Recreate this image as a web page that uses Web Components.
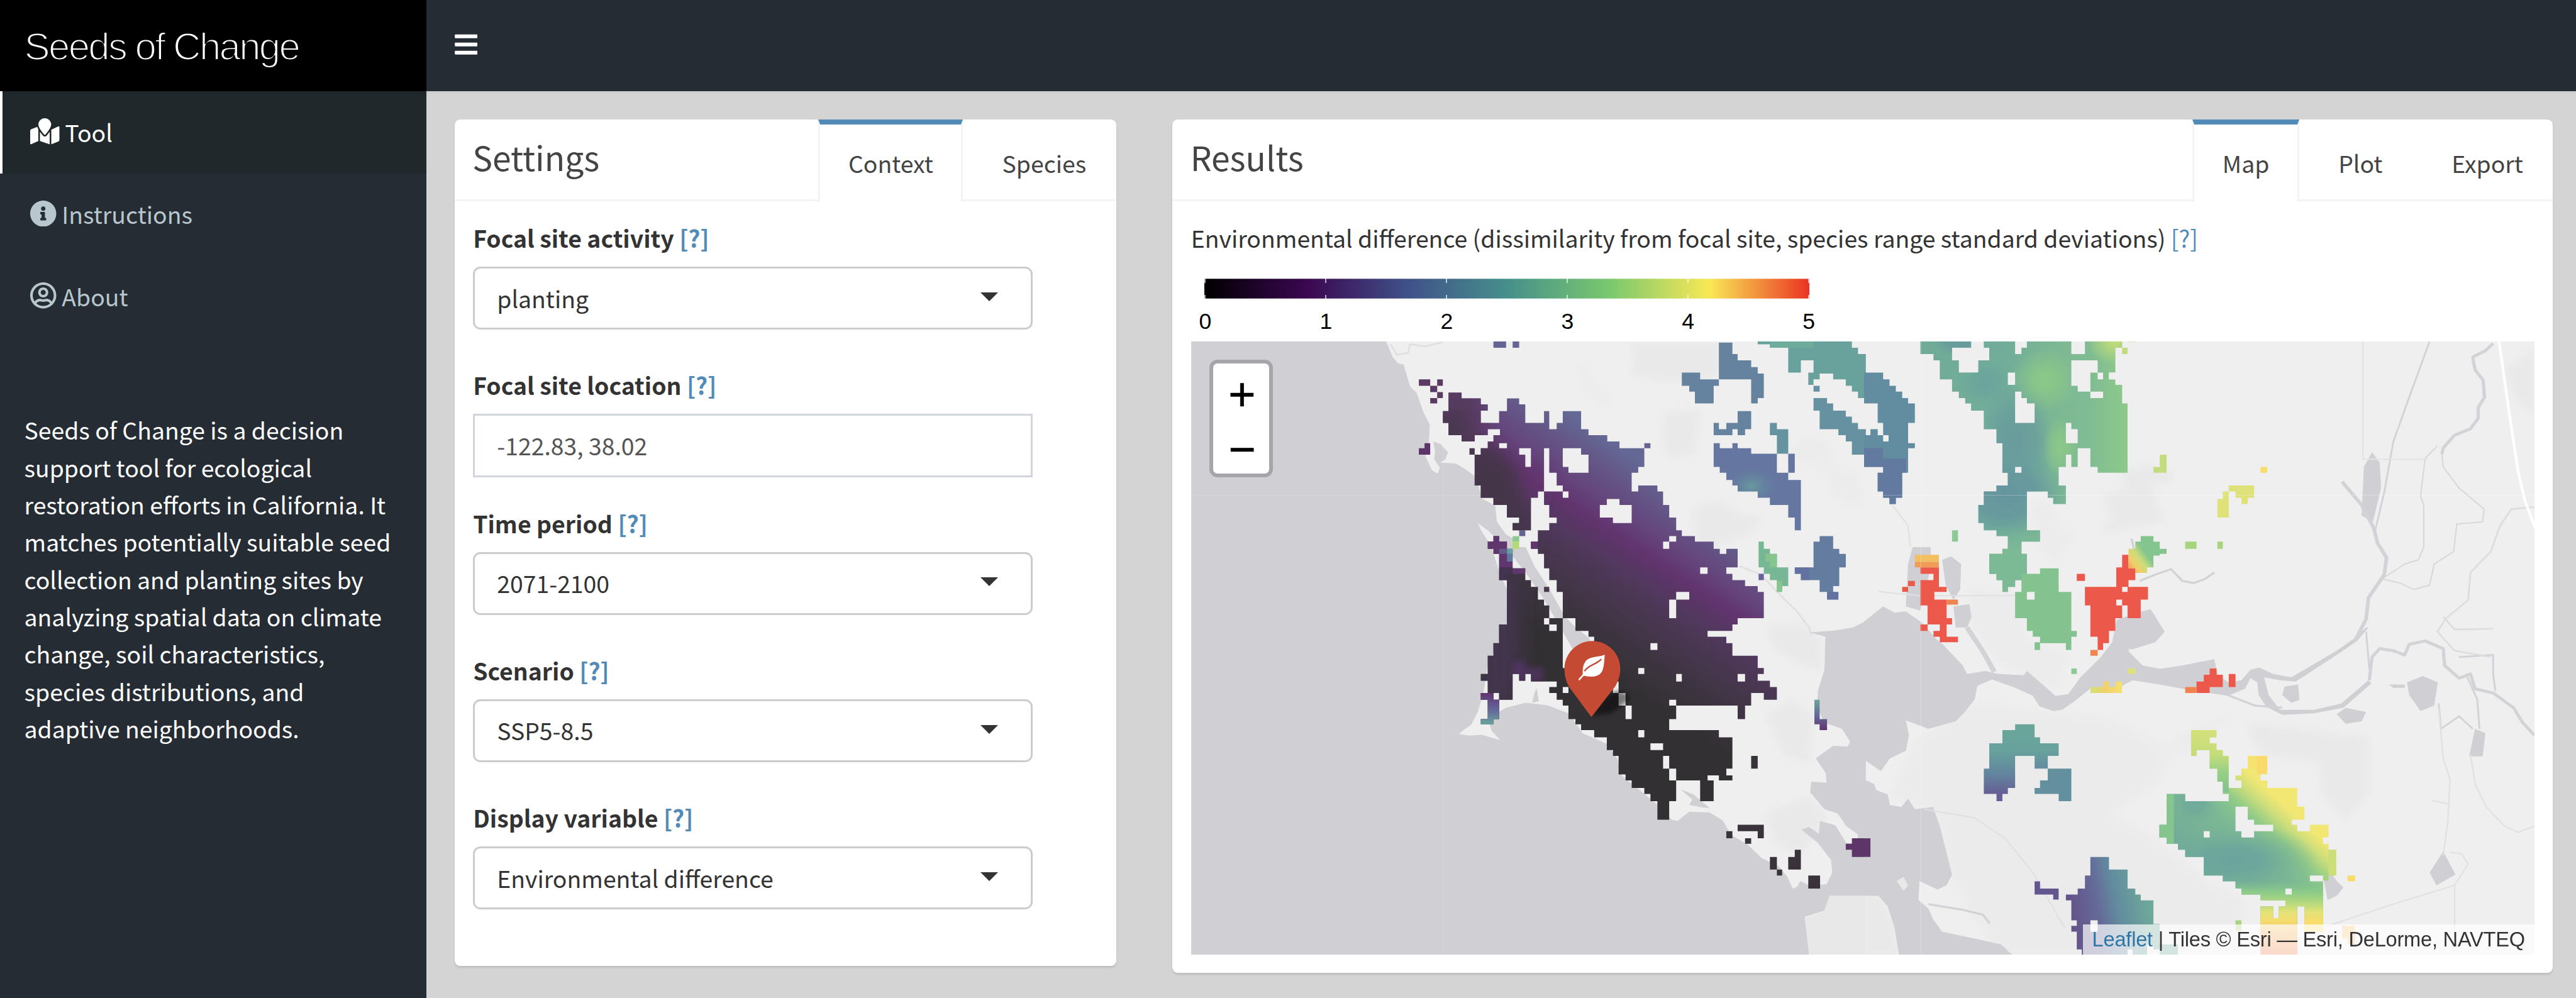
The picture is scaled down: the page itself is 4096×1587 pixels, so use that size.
<!DOCTYPE html>
<html lang="en">
<head>
<meta charset="utf-8">
<title>Seeds of Change</title>
<style>
html,body{margin:0;padding:0;background:#d4d4d4;overflow:hidden}
body{font-family:"Noto Sans CJK JP","Noto Sans",sans-serif;font-size:37.8px;line-height:60px;color:#333}
seeds-app{zoom:.988417}
</style>
</head>
<body>
<seeds-app></seeds-app>
<script>
const define = (name, html, setup) => {
  const t = document.createElement('template');
  t.innerHTML = html;
  customElements.define(name, class extends HTMLElement {
    constructor() {
      super();
      this.attachShadow({mode: 'open'}).appendChild(t.content.cloneNode(true));
    }
    connectedCallback() { if (setup) setup(this, this.shadowRoot); }
  });
};

define('app-header', `
<style>
:host{display:flex;height:147px;background:#252c33;flex:none;box-shadow:0 2px 5px rgba(0,0,0,.06);z-index:1}
.brand{width:686px;background:#000;color:#fff;display:flex;align-items:center;box-sizing:border-box;padding:2px 0 0 39px;
 font:62.5px/147px "Liberation Sans",Arial,sans-serif;letter-spacing:-2.75px;-webkit-text-stroke:2.2px #000;white-space:nowrap}
button{all:unset;display:flex;align-items:center;padding:0 0 3px 45px}
svg{width:37px;height:42px;fill:#fff}
</style>
<div class="brand"><slot></slot></div>
<button aria-label="Toggle navigation"><svg viewBox="0 0 448 512"><path d="M16 132h416c8.800 0 16-7.200 16-16V76c0-8.800-7.200-16-16-16H16C7.200 60 0 67.200 0 76v40c0 8.800 7.200 16 16 16zm0 160h416c8.800 0 16-7.200 16-16v-40c0-8.800-7.200-16-16-16H16c-8.800 0-16 7.200-16 16v40c0 8.800 7.200 16 16 16zm0 160h416c8.800 0 16-7.200 16-16v-40c0-8.800-7.200-16-16-16H16c-8.800 0-16 7.200-16 16v40c0 8.800 7.200 16 16 16z"/></svg></button>`);

define('menu-item', `
<style>
:host{display:flex;align-items:center;height:132px;box-sizing:border-box;border-left:5px solid transparent;padding-left:45px;color:#b8c7ce;fill:#b8c7ce}
:host([active]){background:#20282b;border-color:#fff;color:#fff;fill:#fff}
::slotted(svg){height:42px;flex:none;margin-right:8.500px;margin-bottom:3px}
</style><slot name="icon"></slot><span><slot></slot></span>`);

define('side-bar', `
<style>
:host{display:flex;flex-direction:column;width:686px;background:#252c33;flex:none}
p{margin:119px 0 0 39px;color:#fff;white-space:nowrap}
</style>
<slot></slot><p><slot name="about"></slot></p>`);

define('tab-link', `
<style>
:host{display:block;box-sizing:border-box;padding:0 45px;border:solid transparent;border-width:9px 3.100px 0;line-height:125px;color:#444;height:129px;white-space:nowrap}
:host([active]){border-top-color:#528bb8;border-left-color:#f4f4f4;border-right-color:#f4f4f4;background:#fff;height:133px}
</style><slot></slot>`);

define('tab-box', `
<style>
:host{display:flex;flex-direction:column;background:#fff;border-radius:9px;box-shadow:0 3px 3px rgba(0,0,0,.1);box-sizing:border-box}
header{display:flex;justify-content:space-between;height:132px;box-sizing:border-box;border-bottom:3.100px solid #f4f4f4;padding-left:29px}
h3{margin:0;font-weight:400;font-size:54px;line-height:119px;color:#444}
nav{display:flex;gap:15px}
section{display:flex;flex-direction:column;padding:0 30px}
</style>
<header><h3></h3><nav><slot name="tab"></slot></nav></header><section><slot></slot></section>`,
(el, r) => { r.querySelector('h3').textContent = el.getAttribute('heading'); });

define('form-field', `
<style>
:host{display:flex;flex-direction:column;width:900px;margin-bottom:30px}
label{font-weight:700;height:60px;white-space:nowrap}
a{color:#528bb8}
.box{display:flex;align-items:center;justify-content:space-between;height:101.500px;margin-top:16px;box-sizing:border-box;border:3.100px solid #ccc;border-radius:12px;padding:0 52px 0 35.500px}
.box i{width:0;height:0;border:15px solid transparent;border-top-color:#333;border-bottom:0;margin-bottom:5px}
:host([plain]) .box{border-color:#d3d5de;border-radius:0;color:#555}
:host([plain]) i{display:none}
</style>
<label></label><div class="box"><slot></slot><i></i></div>`,
(el, r) => { r.querySelector('label').innerHTML = el.getAttribute('label') + ' <a>[?]</a>'; });

define('color-legend', `
<style>
:host{display:flex;flex-direction:column;width:973px;margin-left:22px}
.bar{height:33px;display:flex;justify-content:space-between;
 background:linear-gradient(90deg,#000,#3b0751 17%,#3f5189 33.500%,#468f8b 50%,#7ac86f 67%,#f9e855 83.500%,#ea3323);box-shadow:inset 0 1px rgba(255,255,255,.3),inset 0 -1px rgba(255,255,255,.3)}
.bar i{width:2px;background:linear-gradient(rgba(255,255,255,.65) 7px,transparent 7px 26px,rgba(255,255,255,.65) 26px)}
.nums{display:flex;justify-content:space-between;margin:0 -19px;font:36px/42px "Liberation Sans",Arial,sans-serif;color:#000;padding-top:15.500px}
.nums span{width:40px;text-align:center}
</style>
<div class="bar"><i></i><i></i><i></i><i></i><i></i><i></i></div>
<div class="nums"><span>0</span><span>1</span><span>2</span><span>3</span><span>4</span><span>5</span></div>`);

define('zoom-control', `
<style>
:host{display:flex;flex-direction:column;width:90px;border:6.100px solid #a6a5aa;border-radius:13px;overflow:hidden;background:#fff}
a{height:88.500px;display:flex;align-items:center;justify-content:center;color:#000;font:75px/88px "Liberation Sans",Arial,sans-serif;-webkit-text-stroke:.7px #000}
a:first-child{border-bottom:3.100px solid #ccc}
a span{display:block;margin:13px 0 0 2px}
</style><a><span>+</span></a><a><span>−</span></a>`);

define('site-map', `
<style>
:host{display:block;position:relative;width:2161px;height:987px;overflow:hidden;background:#efefef}
svg{display:block;width:2161px;height:987px}
zoom-control{position:absolute;left:30px;top:30px}
.credit{position:absolute;right:0;bottom:0;height:49px;padding:0 15px;background:rgba(255,255,255,.7);font:33px/49px "Liberation Sans",Arial,sans-serif;color:#333;white-space:nowrap;letter-spacing:-.23px}
.credit a{color:#3075a6}
</style>
<svg viewBox="1916 549 2161 987">
<defs>
<linearGradient id="m" gradientUnits="userSpaceOnUse" x1="600" y1="661" x2="942" y2="169">
<stop offset=".17" stop-color="#333034"/><stop offset=".3" stop-color="#3c343f"/><stop offset=".4" stop-color="#45364b"/><stop offset=".53" stop-color="#50385c"/><stop offset=".64" stop-color="#62346f"/><stop offset=".73" stop-color="#65467d"/><stop offset=".81" stop-color="#645384"/><stop offset=".93" stop-color="#646895"/></linearGradient>
<linearGradient id="p1" gradientUnits="userSpaceOnUse" x1="122" y1="0" x2="580" y2="0">
<stop offset="0" stop-color="#70ab98"/><stop offset=".4" stop-color="#70ac99"/><stop offset=".62" stop-color="#7cb794"/><stop offset=".8" stop-color="#7fbb93"/><stop offset="1" stop-color="#8dca89"/></linearGradient>
<linearGradient id="p1b" gradientUnits="userSpaceOnUse" x1="0" y1="450" x2="0" y2="606"><stop offset="0" stop-color="#7cb995" stop-opacity="0"/><stop offset=".35" stop-color="#7cb995"/></linearGradient>
<radialGradient id="g1"><stop offset="0" stop-color="#8bc987"/><stop offset=".3" stop-color="#8bc888" stop-opacity=".85"/><stop offset="1" stop-color="#8bc987" stop-opacity="0"/></radialGradient>
<radialGradient id="g2"><stop offset="0" stop-color="#66949e"/><stop offset=".5" stop-color="#67999e" stop-opacity=".9"/><stop offset="1" stop-color="#6aa29e" stop-opacity="0"/></radialGradient>
<radialGradient id="gy"><stop offset="0" stop-color="#c4dd78"/><stop offset="1" stop-color="#c4dd78" stop-opacity="0"/></radialGradient>
<radialGradient id="gt"><stop offset="0" stop-color="#68a59c"/><stop offset="1" stop-color="#6388a0" stop-opacity="0"/></radialGradient>
<radialGradient id="gb"><stop offset="0" stop-color="#6ba49d"/><stop offset=".35" stop-color="#6ca69c" stop-opacity=".9"/><stop offset="1" stop-color="#78b397" stop-opacity="0"/></radialGradient>
<linearGradient id="up" gradientUnits="userSpaceOnUse" x1="0" y1="919" x2="0" y2="1101"><stop offset="0" stop-color="#6aa699"/><stop offset=".35" stop-color="#68a19d"/><stop offset=".65" stop-color="#63849f"/><stop offset=".9" stop-color="#655f93"/></linearGradient>
<linearGradient id="lo" gradientUnits="userSpaceOnUse" x1="460" y1="1400" x2="630" y2="1370"><stop offset="0" stop-color="#645489"/><stop offset=".35" stop-color="#646a98"/><stop offset=".6" stop-color="#628c9f"/><stop offset="1" stop-color="#6ea899"/></linearGradient>
<linearGradient id="dy" gradientUnits="userSpaceOnUse" x1="760" y1="1280" x2="925" y2="1110"><stop offset="0" stop-color="#70aa99"/><stop offset=".5" stop-color="#7db894"/><stop offset=".62" stop-color="#84c18f"/><stop offset=".72" stop-color="#93cc87"/><stop offset=".88" stop-color="#d0df7a"/><stop offset="1" stop-color="#f3e774"/></linearGradient>
<linearGradient id="dz" gradientUnits="userSpaceOnUse" x1="0" y1="1290" x2="0" y2="1465"><stop offset="0" stop-color="#84c58b" stop-opacity="0"/><stop offset=".15" stop-color="#8ccb89"/><stop offset=".3" stop-color="#b5d97e"/><stop offset=".42" stop-color="#e4e277"/><stop offset=".55" stop-color="#f4dc6e"/><stop offset=".68" stop-color="#f3b962"/><stop offset="1" stop-color="#ef7e50"/></linearGradient>
<linearGradient id="yl" gradientUnits="userSpaceOnUse" x1="0" y1="933" x2="0" y2="1080"><stop offset="0" stop-color="#d4e07a"/><stop offset=".4" stop-color="#c4dc7b"/><stop offset=".7" stop-color="#95cf87"/><stop offset="1" stop-color="#82c08f"/></linearGradient>
<linearGradient id="tp" x1="0" y1="0" x2="0" y2="1"><stop offset="0" stop-color="#6aa69b"/><stop offset=".5" stop-color="#656b99"/><stop offset="1" stop-color="#5f3470"/></linearGradient>
<linearGradient id="pt" x1="0" y1="0" x2="0" y2="1"><stop offset="0" stop-color="#61346f"/><stop offset=".5" stop-color="#65629a"/><stop offset="1" stop-color="#68a49e"/></linearGradient>
<linearGradient id="rg" x1="0" y1="1" x2=".7" y2=".5"><stop offset="0" stop-color="#ef8a50"/><stop offset=".3" stop-color="#f2cf68"/><stop offset=".55" stop-color="#c9dd7b"/><stop offset=".8" stop-color="#84c48e"/></linearGradient>
<linearGradient id="oy"><stop offset="0" stop-color="#d3df7b"/><stop offset=".5" stop-color="#f3d069"/><stop offset="1" stop-color="#f4e273"/></linearGradient>
<filter id="b6" x="-30%" y="-30%" width="160%" height="160%"><feGaussianBlur stdDeviation="7"/></filter>
<filter id="b20" x="-50%" y="-50%" width="200%" height="200%"><feGaussianBlur stdDeviation="20"/></filter>
<path id="M" clip-rule="evenodd" d="M613 134H643V148H687V162H703V177H687V206H729V178H747V148H775V162H789V206H832V178H844V221H861V206H875V178H917V221H934V235H977V250H1005V266H1062V310H1048V324H1033V368H1048V354H1092V368H1105V400H1119V430H1135V460H1148V474H1178V487H1221V504H1235V516H1250V504H1276V548H1250V563H1264V578H1293V592H1322V606H1336V668H1276V683H1264V698H1207V712H1250V727H1264V757H1322V786H1336V800H1322V816H1350V831H1366V861H1336V845H1307V875H1293V907H1276V875H1135V907H1119V933H1233V950H1264V1024H1250V1040H1264V1052H1233V1040H1207V1052H1221V1101H1190V1052H1135V1101H1119V1145H1092V1101H1076V1084H1062V1070H1033V1052H1019V1038H1003V994H990V980H976V950H947V933H917V919H904V907H888V875H875V861H861V845H844V831H861V818H802V800H789V816H775V800H760V861H729V907H716V919H687V907H703V861H687V845H703V816H687V800H703V757H716V727H729V683H747V578H729V516H716V504H703V487H716V474H729V487H747V504H760V550H789V578H802V594H818V624H832V638H844V668H875V757H900L947 722V712H934V698H904V668H875V606H861V578H844V550H832V516H818V504H802V487H818V460H844V443H861V430H844V400H832V368H875V354H861V324H844V266H832V368H818V383H802V460H760V443H775V430H747V400H716V383H687V354H673V281H687V266H703V250H716V235H731V221H703V235H673V250H643V235H613V206H600V178H613Z
M729 254V266H747V254ZM775 266V281H789V310H802V266ZM875 266V310H888V324H934V281H917V266ZM875 368V383H888V368ZM976 386V400H960V430H990V443H1033V400H1005V386ZM1119 474V487H1105V504H1119V487H1135V474ZM1190 548V563H1207V548ZM1135 606V624H1119V668H1135V624H1165V606ZM1076 727V743H1092V727ZM1048 786V800H1062V786ZM1135 800V818H1148V800ZM1276 800V818H1293V800ZM1119 861V875H1135V861ZM1019 875V907H1033V875ZM1048 933V950H1062V933ZM1076 964V980H1105V964ZM1105 994V1024H1119V1052H1135V1024H1119V994ZM832 668V683H844V698H861V683H844V668ZM875 757V786H888V757ZM875 831V845H888V831ZM990 818V845H1003V875H1019V845H1003V818ZM716 845V861H729V845Z"/>
<path id="P1" d="M122 13H234V28H192V58H207V87H250V58H274V28H262V13H331V43H345V28H357V13H455V43H485V13H567V28H552V87H538V103H552V116H567V160H579V324H513V310H497V266H469V310H455V281H443V310H427V354H443V398H415V383H403V368H357V460H386V487H345V516H357V578H331V594H315V606H303V578H290V563H274V516H303V504H315V474H290V460H262V443H250V400H262V368H290V354H315V324H303V254H290V221H262V177H234V160H221V147H207V132H192V103H165V58H151V43H122Z"/>
<path id="P5" d="M719 933H775V950H760V964H775V980H789V994H802V1070H830V1052H817V1040H830V1024H844V994H887V1038H872V1052H887V1070H953V1114H969V1145H941V1157H953V1172H981V1157H1022V1187H1010V1202H1022V1216H1039V1277H1010V1410H969V1350H953V1465H872V1350H900V1378H912V1350H927V1336H872V1322H830V1308H817V1291H789V1277H747V1233H706V1216H690V1202H665V1187H649V1157H665V1084H706V1101H802V1084H789V1055H777V1024H760V980H731V994H719Z"/>
<clipPath id="cm"><use href="#M" clip-rule="evenodd"/></clipPath><clipPath id="c1"><use href="#P1"/></clipPath><clipPath id="c5"><use href="#P5"/></clipPath>
</defs>
<rect x="1916" y="549" width="2161" height="987" fill="#efefef"/>

<g transform="translate(1900 540) scale(.70153 .67985)">
<g fill="#e9e9e9" filter="url(#b6)"><path d="M1030 13H1230L1240 70L1210 105L1110 108L1030 90L1040 50Z"/><path d="M1110 180L1190 175L1175 280L1120 290L1100 240Z"/><path d="M1170 410L1230 390L1290 425L1335 430L1300 470L1240 490L1220 520L1180 480Z"/><path d="M910 60L950 110L985 150L960 160L925 115Z" opacity=".5"/><path d="M1390 285L1430 240L1480 250L1500 320L1550 330L1560 400L1500 380L1480 310Z" opacity=".6"/><path d="M1340 690L1420 680L1470 720L1465 790L1430 780L1360 740Z"/><path d="M1340 900L1400 860L1450 900L1440 1010L1380 990Z"/><path d="M1340 1130L1440 1090L1480 1140L1420 1230L1360 1200Z"/></g>
<path fill="none" stroke="#e0e0e3" stroke-width="4" d="M480 20L495 45L520 40L525 20L560 25L600 15M1280 545L1330 565L1370 610L1410 650L1440 690L1445 710"/>
<path fill="#d0cfd4" d="M23 13H470L485 50L497 65L510 68L525 120L540 135L555 180L570 210L568 250L560 285L575 318L588 326L593 312L580 292L582 272L578 250L595 256L612 276L606 292L594 300L630 302L655 318L676 334L690 385L720 402L724 440L745 470L762 480L765 500L790 500L810 545L845 600L880 665L905 690L935 715L945 740L900 745L875 700L830 620L790 560L755 515L728 485L705 462L680 443L690 465L710 495L730 560L747 600V680L725 730L703 780L694 840L680 890L665 920L636 942L660 946L690 944L732 957L712 935L703 905L745 880L790 868L840 874L890 894L920 940L975 965L1000 1000L1010 1040L1060 1082L1098 1115L1125 1145L1138 1148L1165 1126L1212 1128L1242 1147L1260 1180L1300 1205L1330 1235L1370 1255L1390 1280L1402 1308L1412 1304L1420 1290L1440 1300L1480 1298L1493 1270L1490 1240L1460 1200L1422 1168L1440 1162L1462 1178L1465 1148L1500 1158L1525 1200L1550 1202L1552 1180L1525 1160L1505 1130L1475 1120L1442 1080L1445 1055L1480 1057L1478 1035L1455 1000L1495 970L1528 972L1534 960L1515 930L1475 915L1458 880L1460 840L1475 790L1477 712L1440 702L1500 697L1540 690L1570 675V1325L1487 1325L1475 1360L1430 1375L1440 1465H23Z"/>
<path fill="#e8e8e8" d="M1487 1325H1570V1466H1440L1430 1378L1475 1362Z"/>
<path fill="#d0cfd4" d="M1145 1073L1175 1085L1212 1118L1195 1116L1165 1110L1172 1097ZM815 833L820 865L805 868L810 845Z"/>
<path fill="none" stroke="#fff" stroke-opacity=".15" stroke-width="1.500" d="M601 13V1465M23 377H1568"/>

<path fill="#5b3a63" d="M545 103H571V118H587V103H600V118H587V133H600V147H587V160H571V147H587V133H571V118H545Z"/>
<path fill="#5d3469" d="M545 266H558V254H571V281H545Z"/><path fill="#4a384f" d="M661 266H673V281H661ZM832 594H844V606H832Z"/><path fill="#646593" d="M1062 254H1076V266H1062ZM716 13H745V28H716ZM760 13H775V28H760ZM775 460H789V474H775Z"/>
<use href="#M" fill="url(#m)" fill-rule="evenodd"/>
<g clip-path="url(#cm)">
<g filter="url(#b20)"><path fill="#583a62" d="M570 100H690L700 250H600L570 220Z"/><path fill="#4a3850" d="M560 190L650 170L670 260H560Z"/><path fill="#44364a" d="M640 260H720L770 320L790 400L810 500H640Z"/><path fill="#64346e" d="M790 300L830 310V370L800 390L790 350Z"/></g>
<path filter="url(#b20)" fill="#43344c" d="M690 560H775L780 800L750 900H680Z"/>
<path fill="#61366f" d="M703 487H716V474H729V487H747V534H760V548H729V516H716V504H703ZM760 548H789V563H760ZM802 487H818V504H802Z"/>
<path fill="#48345a" opacity=".6" d="M729 548H760V563H747V578H729Z"/>
<path fill="#57366a" filter="url(#b6)" opacity=".7" d="M760 770H790V785H830V818H760Z"/>
</g>
<path fill="#8cc98f" d="M760 474H775V487H760Z"/><path fill="#b4da77" d="M760 487H775V504H760Z"/><path fill="#67a09e" d="M747 504H760V516H747Z"/><path fill="#6278a0" d="M747 516H760V534H747Z"/><path fill="#655b8c" d="M729 504H747V516H729Z"/>
<path fill="url(#pt)" d="M687 845H716V861H729V907H716V919H687V907H703V861H687Z"/>
<path fill="#39323a" d="M1307 994H1322V1024H1307ZM1276 1157H1336V1189H1322V1172H1276ZM1250 1172H1264V1189H1250ZM1293 1189H1307V1202H1293ZM1350 1233H1366V1263H1350ZM1366 1263H1378V1277H1366ZM1407 1216H1421V1263H1392V1233H1407ZM1438 1277H1465V1308H1438Z"/>
<path fill="#5d3569" d="M1524 1202H1538V1189H1570V1233H1538V1216H1524Z"/>
<path fill="#65829f" d="M1233 16H1264V43H1276V58H1307V74H1322V89H1336V147H1322V160H1307V103H1233V118H1221V160H1178V132H1165V118H1148V87H1190V103H1233ZM1221 206H1233V221H1250V206H1276V178H1307V221H1293V235H1276V221H1264V235H1221Z"/>
<path fill="#65939f" d="M1350 206H1366V221H1392V279H1366V235H1350Z"/>
<path fill="#6576a1" d="M1392 279H1407V324H1392ZM1221 254H1235V266H1264V254H1276V266H1307V279H1366V324H1392V341H1421V460H1407V430H1392V400H1350V383H1322V368H1276V354H1264V341H1250V324H1235V310H1221Z"/>
<path fill="url(#gt)" opacity=".75" d="M1250 310H1366V400H1350V383H1322V368H1276V354H1264V341H1250Z"/>
<path fill="#78b795" d="M1324 487H1336V504H1350V516H1366V548H1392V592H1378V606H1366V578H1350V563H1336V548H1324Z"/><path fill="#88c48d" d="M1340 516H1366V548H1350V534H1340ZM1366 580H1378V606H1366Z"/>
<path fill="#67639a" d="M1324 563H1336V578H1324Z"/>
<path fill="#637ca0" d="M1464 474H1495V504H1509V516H1524V548H1509V592H1495V606H1507V624H1481V606H1464V578H1421V563H1407V548H1450V487H1464Z"/><path fill="#6465a0" opacity=".5" d="M1407 548H1440V578H1421V563H1407ZM1481 606H1507V624H1481Z"/>
<path fill="#69a29d" d="M1322 13H1538V28H1552V43H1570V147H1552V132H1538V118H1524V103H1495V89H1464V103H1450V116H1438V87H1450V58H1421V87H1392V28H1350V20H1322Z"/>
<path fill="#6fb09a" opacity=".6" d="M1350 13H1450V28H1350Z"/>
<path fill="#6591a0" d="M1450 118H1464V132H1450ZM1450 147H1481V160H1495V177H1524V191H1538V206H1552V221H1570V281H1538V250H1524V235H1507V221H1464V177H1450Z"/>
<path fill="url(#tp)" d="M1452 861H1464V907H1481V933H1464V919H1452Z"/>
</g>

<g transform="translate(3000 540) scale(.7296 .67985)">
<g fill="#e9e9e9" filter="url(#b6)"><path d="M560 320L620 305L680 325L670 350L630 350L660 440L520 465L545 430L520 380L575 360Z"/><path d="M370 400L400 390L430 460L460 470L420 530L385 500Z" opacity=".6"/><path d="M230 600L330 610L350 720L450 760L420 830L350 800L290 760L235 680Z" opacity=".6"/><path d="M850 915L1000 935L1110 950V1080L1060 1145L1010 1090L1000 1010L880 990L850 950Z"/><path d="M250 870L380 890L520 900L640 960L700 990L800 900L690 950L640 1060L540 1130L640 1190L700 1240L760 1300L830 1330V1465H300L230 1360L180 1250L160 1130L60 1090L110 960Z" opacity=".75"/><path d="M0 1325H30L65 1390L75 1465H0Z"/><path d="M1410 85L1476 30V180L1440 160Z"/></g>
<path fill="#d0cfd4" d="M-2 676L40 640L65 655L90 652L125 678L160 720L205 757L225 800L265 793L295 800L350 803L357 793L395 828L420 852L448 848L475 808L520 760L545 725L555 672L600 655L630 647L661 700L640 725L580 745L612 780L650 788L700 780L770 765L778 800L800 820L830 815L850 790L870 785L900 800L940 808L1040 745L1080 715L1105 690H1110L1085 722L1040 755L950 818L915 815L880 808L890 850L915 885L990 885L1050 870L1110 815L1117 822L1055 880L990 893L920 897L885 878L868 850L865 820L850 810L838 835L800 852L700 835L650 825L590 815L560 832L500 832L465 862L435 885L415 888L385 877L370 852L330 832L280 813L248 828L242 860L220 890L200 912L140 930L90 910L97 945L90 982L55 1000L35 1030L-2 1003V1050L20 1060L25 1075L50 1085L55 1110L80 1115L95 1095L110 1120L150 1115L165 1160L185 1245L192 1275L180 1300L160 1310L120 1290L118 1335L140 1355L150 1380L170 1410L250 1428L300 1440L325 1465H75L65 1400L50 1350L30 1325H-2Z"/>
<path fill="#efefef" d="M580 740L600 745L665 780L640 782L610 765ZM140 690L180 740L225 790L265 790L225 720L205 690Z"/>
<path fill="#e9e9e9" d="M70 1290L85 1280L95 1300L85 1313Z"/>
<path fill="#d0cfd4" d="M105 500H145V548L122 650L90 640L95 540ZM170 530L190 522L212 540L210 600L195 625L178 590ZM195 640L230 635L235 665L225 690H200ZM1118 275L1135 300L1138 360L1120 440L1095 425L1100 310ZM1195 820L1230 805L1263 820L1255 875L1225 888L1200 850ZM1345 930L1368 940L1362 995H1332ZM1275 1220L1302 1275L1260 1300L1245 1270ZM1025 1265L1040 1290L1055 1305L1040 1325L1020 1335L1012 1290ZM925 830L955 825L958 862L940 868L920 850ZM1040 895L1060 880L1105 890L1095 912L1060 918ZM1155 825H1190V833H1165Z"/>
<g fill="none" stroke="#d2d2d7" stroke-width="5" stroke-linejoin="round">
<path d="M1385 18L1368 35L1340 50L1345 80L1363 105L1366 145L1352 170V195L1335 220L1300 235L1275 265L1272 280" stroke-width="7"/>
<path d="M1272 280L1275 310L1310 360L1365 410L1362 440L1305 445L1298 510L1255 540L1245 590L1210 600L1180 585L1140 575L1190 540L1220 530L1232 500V400L1225 380L1235 290L1262 260" stroke="#d8d8dc" stroke-width="3"/>
<path d="M1245 13L1205 130L1165 250L1145 370L1125 460" stroke-width="4"/>
<path d="M1052 345L1095 400L1122 455L1130 490L1150 525L1145 565L1110 620L1105 670L1080 722" stroke-width="8"/>
<path d="M1098 13V292H1240" stroke="#e3e3e5" stroke-width="3"/>
<path d="M1112 815L1118 760L1135 740L1165 745L1190 755L1200 730L1235 722L1275 740L1278 780L1310 810L1335 800L1345 835L1385 845L1430 880L1450 915L1476 945" stroke-width="7"/>
<path d="M1105 700L1112 790M1310 760L1385 755V800L1390 840M1325 800L1350 860L1355 930M1265 870L1270 930L1310 900L1340 930" stroke-width="4"/>
<path d="M1476 405L1425 410L1400 450L1380 510L1335 560L1330 625L1280 670L1262 700L1300 745L1380 760M1275 665L1300 695L1385 693" stroke="#dddde0" stroke-width="4"/>
<path d="M1265 880L1275 1000L1290 1050L1285 1150L1275 1230M1335 990L1345 1060L1370 1115L1410 1160L1440 1175L1476 1160M1250 1100L1290 1108M1010 1400L1150 1350L1300 1300L1330 1250L1315 1225L1290 1222M1300 1300V1465M30 605L120 615H330M60 400L95 450L100 500M130 1120L240 1140L310 1190L370 1270L440 1400" stroke="#e0e0e3" stroke-width="3"/>
<path d="M606 580L640 565L675 552L700 580L725 585L750 575L770 560M800 850L860 875L920 880M140 1345L215 1358L260 1370L275 1390M588 480L596 520" stroke-width="5"/>
<path d="M225 690L262 750L285 795" stroke-width="11"/>
</g>
<path fill="none" stroke="#fff" stroke-width="6" d="M1398 13L1420 180L1440 320L1455 390L1478 455"/>

<path fill="#628c9f" d="M-2 87H40V103H54V118H68V132H82V147H95V160H110V206H95V254H110V266H95V324H82V383H68V398H54V383H40V368H28V324H40V310H-2V235H12V221H28V235H40V250H52V235H40V206H28V160H-2Z"/>
<path fill="#6475a0" opacity=".8" d="M-2 265H40V290H90V324H82V383H68V398H54V383H40V368H28V324H40V310H-2Z"/>
<use href="#P1" fill="url(#p1)"/>
<g clip-path="url(#c1)"><ellipse cx="205" cy="10" rx="60" ry="40" fill="url(#g2)" opacity=".8"/><ellipse cx="265" cy="110" rx="85" ry="80" fill="url(#gb)"/><ellipse cx="335" cy="250" rx="85" ry="150" fill="url(#g2)" opacity=".75"/><ellipse cx="310" cy="375" rx="140" ry="110" fill="url(#g2)"/><ellipse cx="395" cy="105" rx="75" ry="75" fill="url(#g1)"/><ellipse cx="432" cy="262" rx="40" ry="70" fill="url(#g1)"/><ellipse cx="550" cy="12" rx="60" ry="55" fill="url(#gy)"/><rect x="250" y="450" width="140" height="160" fill="url(#p1b)"/></g>
<path fill="#efefef" d="M455 58H513V87H497V132H469V118H455ZM513 87H525V103H513ZM497 132H525V147H497ZM315 87H331V116H315ZM331 132H345V147H357V160H374V206H331ZM443 206H455V221H469V254H443ZM331 310H345V324H331ZM538 87H552V103H538Z"/>
<path fill="#c0dc78" d="M567 28H579V43H567ZM579 11H596V14H579Z"/>
<path fill="#84c28f" d="M386 550H427V606H455V698H467V712H455V743H443V727H386V743H374V725H386V712H370V698H357V668H331V606H357V624H374V606H345V563H386Z"/>
<path fill="#8dca93" d="M192 460H205V487H192ZM455 787H467V800H455Z"/>
<path fill="#c2dc7e" d="M650 281H665V324H636V310H650Z"/>
<path fill="#a9d47e" d="M706 487H731V504H706ZM777 487H789V504H777ZM817 1383H830V1408H817Z"/>
<path fill="#dee279" d="M802 354H858V383H844V398H830V383H817V368H802V430H777V386H789V368H802ZM579 787H596V800H579Z"/>
<path fill="#f8dd6b" d="M872 310H887V324H872ZM1064 1277H1081V1291H1064Z"/>
<path fill="#ec594a" fill-rule="evenodd" d="M567 518H581V550H596V578H581V594H624V624H608V668H579V638H567V668H552V698H538V727H525V743H513V712H497V638H485V594H554V548H567ZM567 594V606H579V594ZM554 624V638H567V624ZM467 563H485V580H467ZM122 548H163V594H180V606H153V624H180V668H192V683H180V712H205V725H165V712H151V698H165V683H138V638H122V578H151V563H122ZM95 580H110V592H95V606H82V594H95ZM122 683H138V698H122ZM760 787H775V802H789V831H760V845H731V818H747V802H760ZM802 800H817V831H802Z"/>
<path fill="#ef8451" d="M180 624H205V636H180ZM497 743H513V757H497ZM706 831H731V845H706Z"/>
<path fill="#f2bf62" d="M110 518H163V535H110Z"/><path fill="#f09c57" d="M110 535H163V548H110Z"/>
<path fill="url(#rg)" d="M608 474H636V487H650V504H665V516H650V520H636V548H622V561H596V550H581V504H596V487H608Z"/>
<path fill="url(#oy)" d="M497 831H525V818H538V831H552V818H567V845H497Z"/>
<path fill="url(#up)" d="M331 919H374V950H386V964H427V994H403V1024H374V994H331V1070H315V1084H303V1101H290V1084H262V1024H274V964H303V933H331Z"/>
<path fill="#638f9f" d="M403 1024H455V1101H427V1084H374V1070H386V1052H403Z"/>
<path fill="#64568f" d="M374 1291H386V1308H427V1334H415V1322H374Z"/>
<path fill="url(#lo)" d="M497 1233H538V1263H579V1308H596V1322H608V1336H636V1392H650V1440H690V1465H650V1452H636V1440H622V1465H590V1452H579V1465H478V1452H467V1410H455V1396H467V1383H455V1336H443V1322H469V1308H485V1277H497Z"/>
<path fill="#efefef" d="M497 1383H513V1410H497Z"/>
<use href="#P5" fill="url(#dy)"/>
<g clip-path="url(#c5)"><rect x="700" y="930" width="102" height="150" fill="url(#yl)"/><ellipse cx="810" cy="1240" rx="190" ry="85" fill="url(#gb)"/><ellipse cx="728" cy="1105" rx="60" ry="60" fill="url(#gb)" opacity=".7"/><rect x="649" y="1084" width="32" height="120" fill="#8ac98c" opacity=".85"/><rect x="800" y="1290" width="230" height="175" fill="url(#dz)"/><rect x="1022" y="1172" width="20" height="110" fill="#cade79"/><rect x="969" y="1380" width="41" height="30" fill="#f8dc6c"/><rect x="844" y="994" width="20" height="30" fill="#f5e271"/><rect x="864" y="994" width="23" height="43" fill="#f8db6b"/></g>
<path fill="#efefef" d="M817 1114H844V1145H858V1157H900V1172H858V1187H830V1172H817ZM747 1172H760V1187H747ZM927 1308H941V1322H927ZM981 1277H1010V1291H981Z"/><path fill="#a3d27f" d="M1010 1277H1022V1289H1010Z"/>
<path fill="#f5c47a" d="M1052 1396H1080V1440H1064V1425H1052Z"/>
<path fill="#5d3569" d="M-2 1189H12V1233H-2Z"/>
<path fill="none" stroke="#fff" stroke-opacity=".25" stroke-width="1.500" d="M123 13V1465M1175 13V1465M0 377H1476"/>
</g>

<g transform="translate(2200 560) scale(.44643 .5102)">
<path d="M806 1160L850 1100L900 1080L940 1090L940 1110L880 1150Z" fill="#000" opacity=".5" filter="url(#b6)"/>
<path d="M806 1163L726 1068C714 1050 709 1030 709 1010C709 962 755 923 809 923C864 923 910 962 910 1010C910 1030 905 1046 892 1066Z" fill="#c44a33"/>
<path fill="#fff" d="M854 966C852 1004 848 1018 838 1026C828 1035 812 1036 795 1035C788 1034 782 1033 778 1033L763 1048L759 1044L775 1028C774 1010 776 996 788 984C806 970 836 974 854 966Z"/>
<path fill="none" stroke="#c44a33" stroke-width="5" d="M781 1018C800 995 820 1000 842 980"/>
</g>
</svg>
<zoom-control></zoom-control>
<div class="credit"><a>Leaflet</a> | Tiles © Esri — Esri, DeLorme, NAVTEQ</div>`);

define('seeds-app', `
<style>
:host{display:flex;flex-direction:column;width:4144px;height:1606px;background:#d4d4d4}
main{display:flex;flex:1;align-items:flex-start}
side-bar{align-self:stretch}
.set{width:1064.500px;height:1362px;margin:45px 0 0 45px}
.res{width:2221px;height:1373px;margin:45px 0 0 90.500px}
.f{display:flex;flex-direction:column;padding-top:29px}
form-field{margin-bottom:59.500px}
form-field[plain]{margin-bottom:44.500px}
.desc{margin-top:29px;height:60px;white-space:nowrap}
.desc a{color:#528bb8}
color-legend{margin-top:35px;height:101px}
</style>
<app-header>Seeds of Change</app-header>
<main>
<side-bar>
<menu-item active><svg slot="icon" viewBox="0 0 576 512" width="47"><path d="M288 0c-69.590 0-126 56.410-126 126 0 56.260 82.350 158.800 113.900 196.020 6.390 7.540 17.820 7.540 24.200 0C331.650 284.800 414 182.260 414 126 414 56.410 357.590 0 288 0zM20.120 215.950A32.006 32.006 0 0 0 0 245.660v250.320c0 11.320 11.430 19.060 21.940 14.860L160 448V214.920c-8.840-15.980-16.070-31.540-21.250-46.420L20.120 215.950zM288 359.670c-14.070 0-27.380-6.180-36.510-16.960-19.660-23.200-40.570-49.620-59.490-76.720v182l192 64V266c-18.920 27.090-39.820 53.520-59.490 76.720-9.130 10.770-22.440 16.950-36.510 16.950zm266.060-198.510L416 224v288l139.880-55.950A31.996 31.996 0 0 0 576 426.340V176.020c0-11.320-11.430-19.060-21.940-14.860z"/></svg>Tool</menu-item>
<menu-item><svg slot="icon" viewBox="8 8 496 496" width="42"><path d="M256 8C119.043 8 8 119.083 8 256c0 136.997 111.043 248 248 248s248-111.003 248-248C504 119.083 392.957 8 256 8zm0 110c23.196 0 42 18.804 42 42s-18.804 42-42 42-42-18.804-42-42 18.804-42 42-42zm56 254c0 6.627-5.373 12-12 12h-88c-6.627 0-12-5.373-12-12v-24c0-6.627 5.373-12 12-12h12v-64h-12c-6.627 0-12-5.373-12-12v-24c0-6.627 5.373-12 12-12h64c6.627 0 12 5.373 12 12v100h12c6.627 0 12 5.373 12 12v24z"/></svg>Instructions</menu-item>
<menu-item><svg slot="icon" viewBox="0 8 496 496" width="42"><path d="M248 104c-53 0-96 43-96 96s43 96 96 96 96-43 96-96-43-96-96-96zm0 144c-26.500 0-48-21.500-48-48s21.500-48 48-48 48 21.500 48 48-21.500 48-48 48zm0-240C111 8 0 119 0 256s111 248 248 248 248-111 248-248S385 8 248 8zm0 448c-49.700 0-95.100-18.300-130.100-48.400 14.900-23 40.400-38.600 69.600-39.500 20.800 6.400 40.600 9.600 60.500 9.600s39.700-3.100 60.500-9.600c29.200 1 54.700 16.500 69.600 39.500-35 30.100-80.400 48.400-130.100 48.400zm162.700-84.100c-24.400-31.400-62.100-51.900-105.100-51.900-10.200 0-26 9.600-57.600 9.600-31.500 0-47.400-9.600-57.600-9.600-42.900 0-80.600 20.500-105.100 51.900C61.900 339.200 48 299.200 48 256c0-110.300 89.700-200 200-200s200 89.700 200 200c0 43.200-13.900 83.200-37.300 115.900z"/></svg>About</menu-item>
<span slot="about">Seeds of Change is a decision<br>support tool for ecological<br>restoration efforts in California. It<br>matches potentially suitable seed<br>collection and planting sites by<br>analyzing spatial data on climate<br>change, soil characteristics,<br>species distributions, and<br>adaptive neighborhoods.</span>
</side-bar>
<tab-box class="set" heading="Settings">
<tab-link slot="tab" active>Context</tab-link><tab-link slot="tab">Species</tab-link>
<div class="f">
<form-field label="Focal site activity">planting</form-field>
<form-field label="Focal site location" plain>-122.83, 38.02</form-field>
<form-field label="Time period">2071-2100</form-field>
<form-field label="Scenario">SSP5-8.5</form-field>
<form-field label="Display variable">Environmental difference</form-field>
</div>
</tab-box>
<tab-box class="res" heading="Results">
<tab-link slot="tab" active>Map</tab-link><tab-link slot="tab">Plot</tab-link><tab-link slot="tab">Export</tab-link>
<div class="desc">Environmental difference (dissimilarity from focal site, species range standard deviations) <a>[?]</a></div>
<color-legend></color-legend>
<site-map></site-map>
</tab-box>
</main>`);
</script>
</body>
</html>
